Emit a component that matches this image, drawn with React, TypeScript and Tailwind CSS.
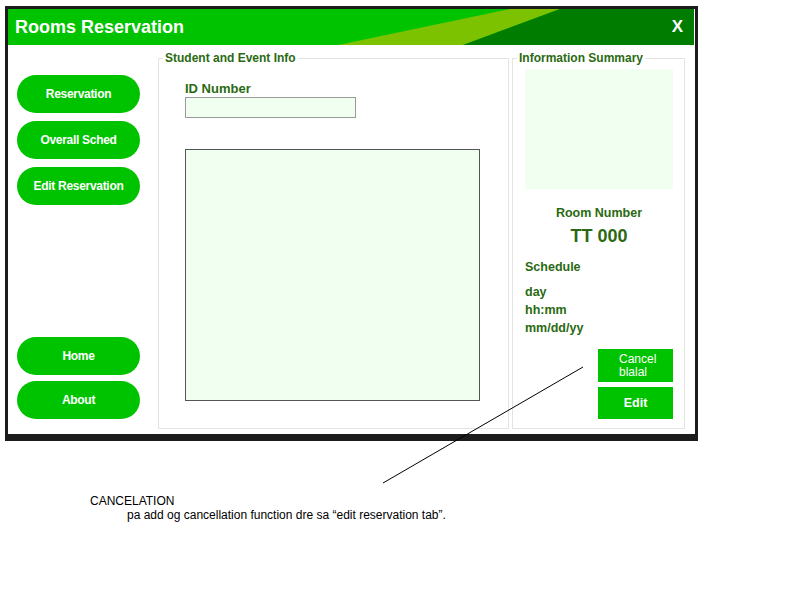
const green = "bg-[#00c300]"

function SideButton({ label }: { label: string }) {
  return (
    <button className={`${green} h-[38px] w-[123px] rounded-full text-[12px] font-bold text-white tracking-tight`}>
      {label}
    </button>
  )
}

function HeaderStripes() {
  return (
    <svg className="absolute inset-0" width="686" height="36" viewBox="0 0 686 36">
      <rect x="0" y="0" width="686" height="36" fill="#00c300" />
      <polygon points="502,0 552,0 455,36 330,36" fill="#7cc200" />
      <polygon points="552,0 686,0 686,36 455,36" fill="#007d00" />
    </svg>
  )
}

export default function App() {
  return (
    <div className="relative w-[800px] h-[600px] bg-white overflow-hidden" style={{ fontFamily: '"Liberation Sans", Arial, sans-serif' }}>
      {/* window */}
      <div className="ml-[5px] mt-[6px] w-[693px] h-[435px] border-[3px] border-b-[7px] border-[#1c1c1c] flex flex-col bg-white">
        <div className="relative h-[36px] shrink-0 flex items-center justify-between px-[7px]">
          <HeaderStripes />
          <span className="relative text-[18px] font-bold text-white">Rooms Reservation</span>
          <span className="relative text-[17px] font-bold text-white mr-[5px]">X</span>
        </div>

        <div className="flex flex-1 text-[#2a6a12]">
          {/* sidebar */}
          <div className="w-[150px] shrink-0 flex flex-col justify-between pl-[9px] pt-[30px] pb-[15px]">
            <div className="flex flex-col gap-[8px]">
              <SideButton label="Reservation" />
              <SideButton label="Overall Sched" />
              <SideButton label="Edit Reservation" />
            </div>
            <div className="flex flex-col gap-[6px]">
              <SideButton label="Home" />
              <SideButton label="About" />
            </div>
          </div>

          {/* student and event info */}
          <fieldset className="w-[351px] mt-[6px] mb-[5px] border border-[#e3e3e3] pl-[4px]">
            <legend className="px-[2px] text-[12px] font-bold leading-[14px]">Student and Event Info</legend>
            <div className="ml-[22px]">
              <div className="mt-[17px] text-[13px] font-bold leading-[14px]">ID Number</div>
              <div className="mt-[1px] h-[21px] w-[171px] border border-[#9a9a9a] bg-[#f0fff0]" />
              <div className="mt-[31px] h-[252px] w-[295px] border border-[#555] bg-[#f0fff0]" />
            </div>
          </fieldset>

          {/* info summary */}
          <fieldset className="ml-[3px] w-[173px] mt-[6px] mb-[5px] border border-[#e3e3e3] pl-[4px] pr-[11px]">
            <legend className="px-[2px] text-[12px] font-bold leading-[14px]">Information Summary</legend>
            <div className="h-full flex flex-col pl-[8px]">
              <div className="mt-[4px] h-[120px] w-[148px] bg-[#f0fff0]" />
              <div className="mt-[16px] text-center text-[12.5px] font-bold leading-[16px]">Room Number</div>
              <div className="mt-[4px] text-center text-[18px] font-bold leading-[22px]">TT 000</div>
              <div className="mt-[12px] text-[12.5px] font-bold leading-[16px]">Schedule</div>
              <div className="mt-[8px] text-[12.5px] font-bold leading-[18px]">
                <div>day</div>
                <div>hh:mm</div>
                <div>mm/dd/yy</div>
              </div>
              <div className="mt-auto mb-[9px] self-end flex flex-col gap-[5px]">
                <button className={`${green} h-[33px] w-[75px] text-white text-[12px] leading-[13px] text-left pl-[21px]`}>
                  Cancel
                  <br />
                  blalal
                </button>
                <button className={`${green} h-[32px] w-[75px] text-white text-[12.5px] font-bold`}>Edit</button>
              </div>
            </div>
          </fieldset>
        </div>
      </div>

      {/* annotation */}
      <svg className="absolute left-0 top-0 pointer-events-none" width="800" height="600">
        <line x1="583" y1="367" x2="383" y2="483" stroke="#000" strokeWidth="1" />
      </svg>
      <div className="ml-[90px] mt-[53px] text-[12px] leading-[14px] text-black">
        <div>CANCELATION</div>
        <div className="pl-[37px]">pa add og cancellation function dre sa “edit reservation tab”.</div>
      </div>
    </div>
  )
}
